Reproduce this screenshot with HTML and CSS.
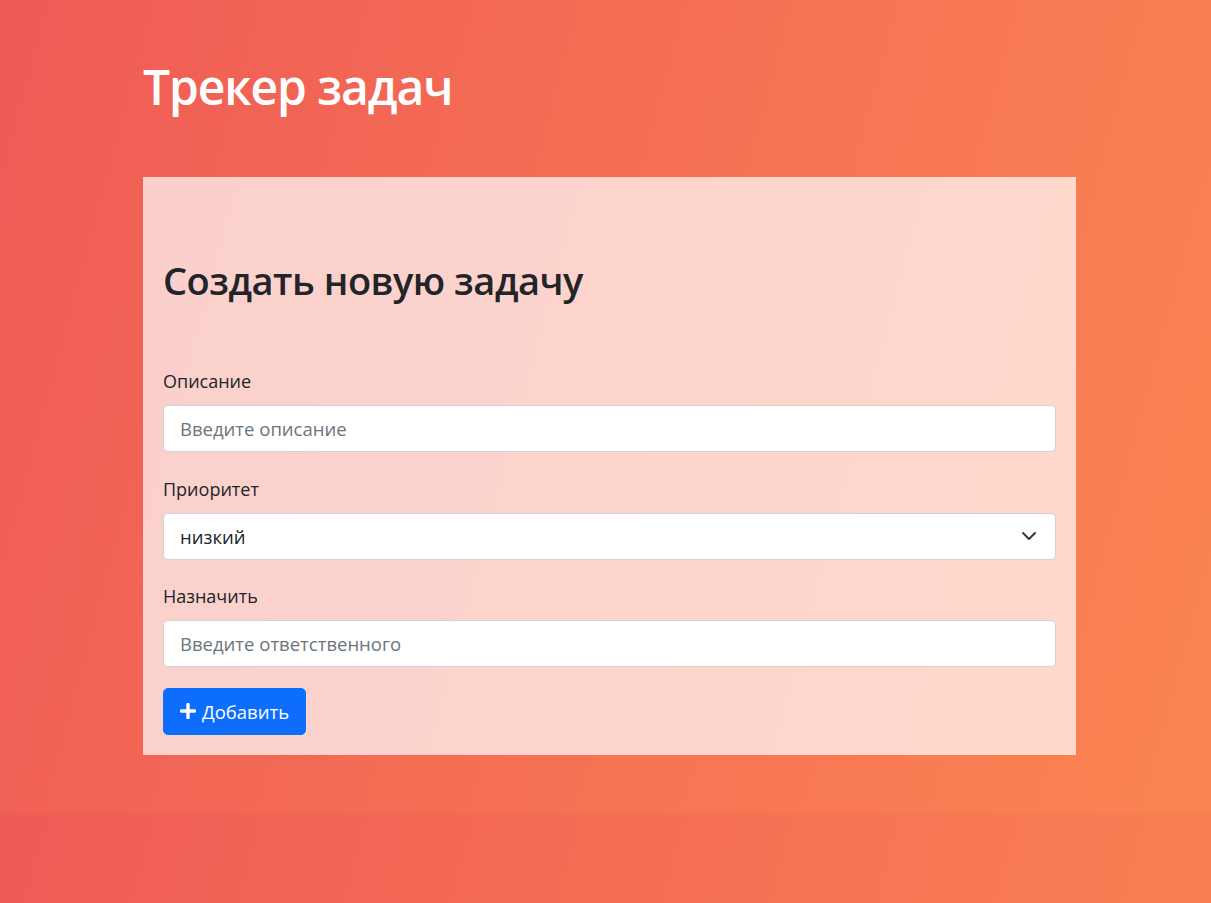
FILE: index.html
```html
<!DOCTYPE html>
<html lang="ru">
<head>
<meta charset="utf-8">
<title>Трекер задач</title>
<link rel="stylesheet" href="styles.css">
</head>
<body>
<div class="page">
  <header class="header">
    <h1 class="title">Трекер задач</h1>
  </header>
  <section class="card">
    <h2 class="card-title">Создать новую задачу</h2>
    <form class="form">
      <div class="field">
        <label class="label" for="desc">Описание</label>
        <input class="control" id="desc" type="text" placeholder="Введите описание">
      </div>
      <div class="field">
        <label class="label" for="prio">Приоритет</label>
        <div class="select">
          <span class="select-value">низкий</span>
          <svg class="chevron" width="16" height="16" viewBox="0 0 16 16" aria-hidden="true"><path d="m2 5 6 6 6-6" fill="none" stroke="#343a40" stroke-width="2" stroke-linecap="round" stroke-linejoin="round"/></svg>
        </div>
      </div>
      <div class="field field-last">
        <label class="label" for="who">Назначить</label>
        <input class="control" id="who" type="text" placeholder="Введите ответственного">
      </div>
      <button class="btn" type="button">
        <svg class="plus" width="16" height="16" viewBox="0 0 16 16" aria-hidden="true"><path d="M8 1.5v13M1.5 8h13" stroke="#fff" stroke-width="3.4" stroke-linecap="round"/></svg>
        <span>Добавить</span>
      </button>
    </form>
  </section>
</div>
</body>
</html>
```

FILE: styles.css
```css
html {
  margin: 0;
}
body {
  margin: 0;
  font-family: "Open Sans", "Noto Sans", sans-serif;
  color: #212529;
  background: linear-gradient(105deg, #ef5b56 0%, #fb8552 100%);
}
.page {
  width: 933px;
  margin-left: calc(50% - 462.5px);
  padding-top: 58px;
  padding-bottom: 58px;
}
.header {
  margin-bottom: 61px;
}
.title {
  margin: 0;
  font-size: 48px;
  line-height: 1.2;
  font-weight: 600;
  color: #fff;
  letter-spacing: -1.1px;
}
.card {
  background: rgba(255, 255, 255, 0.7);
  padding: 20px;
}
.card-title {
  margin: 0;
  padding-top: 61.6px;
  padding-bottom: 64.6px;
  font-size: 38px;
  line-height: 1.2;
  font-weight: 600;
  color: #212529;
  letter-spacing: -0.5px;
}
.form {
  display: flex;
  flex-direction: column;
}
.field {
  display: flex;
  flex-direction: column;
  margin-bottom: 23.5px;
}
.field-last {
  margin-bottom: 20.5px;
}
.label {
  font-size: 18px;
  line-height: 27px;
  margin-bottom: 10px;
  color: #212529;
}
.control,
.select {
  box-sizing: border-box;
  height: 47px;
  width: 100%;
  padding: 0 16px;
  border: 1px solid #ced4da;
  border-radius: 5px;
  background: #fff;
  font-family: inherit;
  font-size: 18.5px;
  color: #212529;
}
.control::placeholder {
  color: #6c757d;
  opacity: 1;
}
.select {
  display: flex;
  align-items: center;
  justify-content: space-between;
}
.chevron {
  margin-right: 2px;
}
.btn {
  align-self: flex-start;
  display: inline-flex;
  align-items: center;
  gap: 6px;
  height: 47px;
  padding: 0 16px;
  border: 1px solid #0d6efd;
  border-radius: 5px;
  background: #0d6efd;
  color: #fff;
  font-family: inherit;
  font-size: 18.5px;
  cursor: pointer;
}
```
